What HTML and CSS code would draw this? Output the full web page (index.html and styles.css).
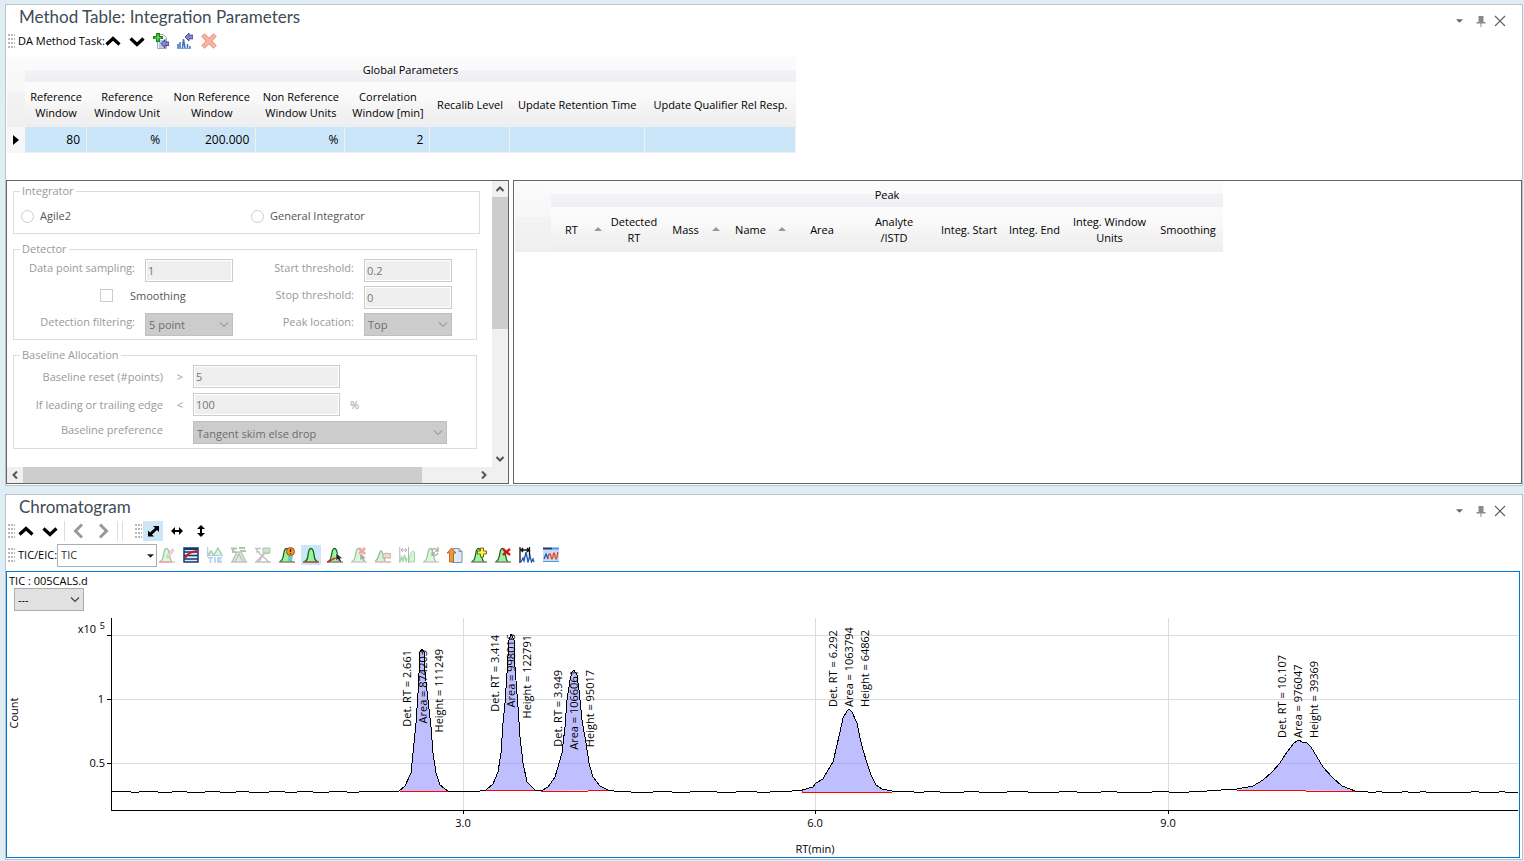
FILE: index.html
```html
<!DOCTYPE html>
<html lang="en">
<head>
<meta charset="utf-8">
<title>Data Analysis Method</title>
<link rel="stylesheet" href="styles.css">
</head>
<body>
<svg class="defs" aria-hidden="true">
  <defs>
    <symbol id="up" viewBox="0 0 16 16"><path d="M1.500 11.500 8 5.500l6.500 6" fill="none" stroke="currentColor" stroke-width="3.200"/></symbol>
    <symbol id="down" viewBox="0 0 16 16"><path d="M1.500 5.500 8 11.500l6.500-6" fill="none" stroke="currentColor" stroke-width="3.200"/></symbol>
    <symbol id="left" viewBox="0 0 16 16"><path d="M11 1.500 4.500 8l6.500 6.500" fill="none" stroke="currentColor" stroke-width="3"/></symbol>
    <symbol id="right" viewBox="0 0 16 16"><path d="m5 1.500 6.500 6.500L5 14.500" fill="none" stroke="currentColor" stroke-width="3"/></symbol>
    <symbol id="chev" viewBox="0 0 10 6"><path d="m1 .5 4 4 4-4" fill="none" stroke="currentColor" stroke-width="1.200"/></symbol>
    <symbol id="tri" viewBox="0 0 8 4"><path d="M0 0h8L4 4z" fill="currentColor"/></symbol>
    <symbol id="pin" viewBox="0 0 10 12"><path d="M2.500 1h5v6h2v1.500h-4V12h-1V8.500h-4V7h2z" fill="#8a8a8a"/></symbol>
    <symbol id="close" viewBox="0 0 12 12"><path d="m1 1 10 10M11 1 1 11" stroke="#5d666d" stroke-width="1.200"/></symbol>
    <symbol id="bell" viewBox="0 0 16 16"><path d="M1.500 14.500c3-1 3-3 3.600-7C5.500 4 6 1.500 8 1.500s2.500 2.500 3 6c.6 4 .6 6 3.500 7z" fill="#9af29a"/><path d="M1.500 14.500c3-1 3-3 3.600-7C5.500 4 6 1.500 8 1.500s2.500 2.500 3 6c.6 4 .6 6 3.500 7" fill="none" stroke="#12651b" stroke-width="1.300"/><path d="M0 15h16" stroke="#a04030" stroke-width="1.500"/></symbol>
    <symbol id="bell-left" viewBox="0 0 16 16"><path d="M1 14.500c2.500-1 3-3 3.600-7C5 4 5.500 1.500 7.500 1.500S10 4 10.500 7.500c.6 4 .6 6 2.500 7z" fill="#9af29a"/><path d="M1 14.500c2.500-1 3-3 3.600-7C5 4 5.500 1.500 7.500 1.500S10 4 10.500 7.500c.6 4 .6 6 2.500 7" fill="none" stroke="#12651b" stroke-width="1.300"/><path d="M0 15h16" stroke="#665" stroke-width="1.200"/></symbol>
    <symbol id="cursor" viewBox="0 0 8 10"><path d="M1 0v8l2-2 2 3.500 1.500-1L5 5.500h2.500z" fill="#222" stroke="#fff" stroke-width=".5"/></symbol>
  </defs>
</svg>
<main class="workspace">
  <section class="panel">
    <header class="titlebar">
      <h1>Method Table: Integration Parameters</h1>
      <div class="window-tools">
        <button aria-label="Window menu"><svg class="menu-tri"><use href="#tri"/></svg></button>
        <button aria-label="Pin"><svg class="pin"><use href="#pin"/></svg></button>
        <button aria-label="Close"><svg class="close"><use href="#close"/></svg></button>
      </div>
    </header>
    <div class="toolbar task">
      <span class="grip"></span>
      <span class="tool-label">DA Method Task:</span>
      <button aria-label="Previous task"><svg><use href="#up"/></svg></button>
      <button aria-label="Next task"><svg><use href="#down"/></svg></button>
      <button aria-label="Add method"><svg viewBox="0 0 16 16"><path d="M4.500 1.500h6l3 3v11h-9z" fill="#eef3fa" stroke="#9aa9bd"/><path d="M6 8h5M6 10h4M6 12h5M6 14h6" stroke="#8fa5c4"/><path d="M3 0h4v3h3v3H7v3H3V6H0V3h3z" fill="#178a1c"/><path d="M4.500 1.500h1v3h3v.8h-3v2.500h-1V5.300h-3v-.8h3z" fill="#9be58c"/><path d="m8 10.500 4-4v2.500h4v3.500h-4V15z" fill="#8b85cf" stroke="#3f3a85" stroke-width=".9"/></svg></button>
      <button aria-label="Add from chromatogram"><svg viewBox="0 0 16 16"><path d="M1 15v-4M3 15V9M5.500 15l1-9 1.500 9M10.500 15v-4M13 15v-2" fill="none" stroke="#3c70b8" stroke-width="1.500"/><path d="M0 15.500h14" stroke="#79a9dc"/><path d="m8 4 4-4v2.200h4v3.600h-4V8z" fill="#8b85cf" stroke="#3f3a85" stroke-width=".9"/></svg></button>
      <button aria-label="Delete"><svg viewBox="0 0 16 16"><path d="M3.500.8 8 5.200 12.500.8l2.700 2.700L10.800 8l4.400 4.500-2.700 2.700L8 10.800l-4.500 4.400-2.700-2.700L5.200 8 .8 3.500z" fill="#f8b2a4" stroke="#e29082"/></svg></button>
    </div>
    <table class="grid global">
      <colgroup><col class="w18"><col class="w62"><col class="w80"><col class="w89"><col class="w89"><col class="w85"><col class="w79"><col class="w135"><col class="w151"></colgroup>
      <thead>
        <tr class="group"><th class="corner" rowspan="2"></th><th colspan="8">Global Parameters</th></tr>
        <tr class="heads"><th>Reference<br>Window</th><th>Reference<br>Window Unit</th><th>Non Reference<br>Window</th><th>Non Reference<br>Window Units</th><th>Correlation<br>Window [min]</th><th>Recalib Level</th><th>Update Retention Time</th><th>Update Qualifier Rel Resp.</th></tr>
      </thead>
      <tbody>
        <tr><th class="marker"><svg viewBox="0 0 6 10"><path d="M0 0v10l6-5z"/></svg></th><td>80</td><td>%</td><td>200.000</td><td>%</td><td>2</td><td></td><td></td><td></td></tr>
      </tbody>
    </table>
    <div class="split">
      <div class="form-box">
        <form class="params">
          <fieldset class="integrator" disabled>
            <legend>Integrator</legend>
            <div class="choices">
              <label><input type="radio" name="integrator">Agile2</label>
              <label><input type="radio" name="integrator">General Integrator</label>
            </div>
          </fieldset>
          <fieldset class="detector" disabled>
            <legend>Detector</legend>
            <div class="detector-grid">
              <label for="sampling">Data point sampling:</label><input id="sampling" value="1">
              <label for="start">Start threshold:</label><input id="start" value="0.2">
              <label class="check"><input type="checkbox">Smoothing</label>
              <label for="stop">Stop threshold:</label><input id="stop" value="0">
              <label for="filter">Detection filtering:</label><span class="drop"><select id="filter"><option>5 point</option></select><svg><use href="#chev"/></svg></span>
              <label for="location">Peak location:</label><span class="drop"><select id="location"><option>Top</option></select><svg><use href="#chev"/></svg></span>
            </div>
          </fieldset>
          <fieldset class="baseline" disabled>
            <legend>Baseline Allocation</legend>
            <div class="baseline-grid">
              <label for="reset">Baseline reset (#points)</label><span class="sign">&gt;</span><input id="reset" value="5"><span></span>
              <label for="edge">If leading or trailing edge</label><span class="sign">&lt;</span><input id="edge" value="100"><span>%</span>
              <label class="raised" for="pref">Baseline preference</label><span></span><span class="drop wide"><select id="pref"><option>Tangent skim else drop</option></select><svg><use href="#chev"/></svg></span>
            </div>
          </fieldset>
        </form>
        <div class="vbar"><button aria-label="Scroll up"><svg viewBox="0 0 8 8"><path d="m.5 6 3.500-3.500L7.500 6"/></svg></button><div class="vtrack"><span class="vthumb"></span></div><button aria-label="Scroll down"><svg viewBox="0 0 8 8"><path d="M.5 2 4 5.500 7.500 2"/></svg></button></div>
        <div class="hbar"><button aria-label="Scroll left"><svg viewBox="0 0 8 8"><path d="M6 .5 2.500 4 6 7.500"/></svg></button><div class="htrack"><span class="hthumb"></span></div><button aria-label="Scroll right"><svg viewBox="0 0 8 8"><path d="M2 .5 5.500 4 2 7.500"/></svg></button></div>
      </div>
      <div class="peak-box">
        <table class="grid peaks">
          <colgroup><col class="w36"><col class="w56"><col class="w54"><col class="w64"><col class="w66"><col class="w62"><col class="w82"><col class="w68"><col class="w63"><col class="w87"><col class="w70"></colgroup>
          <thead>
            <tr class="group"><th class="corner" rowspan="2"></th><th colspan="10">Peak</th></tr>
            <tr class="heads"><th class="sort">RT</th><th>Detected<br>RT</th><th class="sort">Mass</th><th class="sort">Name</th><th>Area</th><th>Analyte<br>/ISTD</th><th>Integ. Start</th><th>Integ. End</th><th>Integ. Window<br>Units</th><th>Smoothing</th></tr>
          </thead>
        </table>
      </div>
    </div>
  </section>

  <section class="panel">
    <header class="titlebar">
      <h1>Chromatogram</h1>
      <div class="window-tools">
        <button aria-label="Window menu"><svg class="menu-tri"><use href="#tri"/></svg></button>
        <button aria-label="Pin"><svg class="pin"><use href="#pin"/></svg></button>
        <button aria-label="Close"><svg class="close"><use href="#close"/></svg></button>
      </div>
    </header>
    <div class="toolbar nav">
      <span class="grip"></span>
      <button aria-label="Previous sample"><svg><use href="#up"/></svg></button>
      <button aria-label="Next sample"><svg><use href="#down"/></svg></button>
      <span class="sep"></span>
      <button class="grey" aria-label="Back"><svg><use href="#left"/></svg></button>
      <button class="grey" aria-label="Forward"><svg><use href="#right"/></svg></button>
      <span class="sep"></span><span class="sep"></span>
      <span class="grip second"></span>
      <button class="on" aria-label="Zoom both"><svg viewBox="0 0 16 16"><path d="M8 3h6v6l-2-2-5 4.500 2 2H3v-6l2 2L10 5z"/></svg></button>
      <button aria-label="Zoom horizontally"><svg viewBox="0 0 16 16"><path d="m2 8 4-4v3h4V4l4 4-4 4V9H6v3z"/></svg></button>
      <button aria-label="Zoom vertically"><svg viewBox="0 0 16 16"><path d="m8 2 4 4H9v4h3l-4 4-4-4h3V6H4z"/></svg></button>
    </div>
    <div class="toolbar tic">
      <span class="grip"></span>
      <label class="tool-label" for="trace">TIC/EIC:</label>
      <span class="drop combo"><select id="trace"><option>TIC</option></select><svg><use href="#tri"/></svg></span>
      <button class="off" aria-label="Manual integration"><svg viewBox="0 0 16 16"><use href="#bell-left"/><path d="m7 10 6-8 2 1.500-6 7.500z" fill="#e8a080" stroke="#805050" stroke-width=".8"/><path d="M0 15h13" stroke="#e02020" stroke-width="1.500"/></svg></button>
      <button aria-label="Calibration list"><svg viewBox="0 0 16 16"><path d="M1 1h14v14H1z" fill="#dfe8f5" stroke="#17386e" stroke-width="1.500"/><path d="M1 5h14M1 8.500h14M1 12h14" stroke="#17386e" stroke-width="1.300"/><path d="M1 2h14" stroke="#17386e" stroke-width="2"/><path d="M2 11c3-4 4-6 12-7" fill="none" stroke="#c81a1a" stroke-width="2"/></svg></button>
      <button class="off" aria-label="Show TIC"><svg viewBox="0 0 16 16"><path d="M.7 0v10M0 8.500h16" stroke="#347bd0" stroke-width="1.200"/><path d="m1 8 3-4 3 4 4-7 4 7" fill="#a8e8a0" stroke="#26892a" stroke-width="1.500"/><path d="M1 10.700h5M3.500 11v5M8 10v6M15 10.700h-4V15h4M11 13h3" fill="none" stroke="#347bd0" stroke-width="1.500"/></svg></button>
      <button class="off" aria-label="Extract peaks"><svg viewBox="0 0 16 16"><path d="M0 1.500h6M2 2v3h3M8 1h6M9 4h6" fill="none" stroke="#267b2a" stroke-width="2"/><path d="M1 15 6 5h4l5 10M4 15l4-8 4 8M0 15h16" fill="#a8dca8" stroke="#666" stroke-width="1.500"/></svg></button>
      <button class="off" aria-label="Extract ions"><svg viewBox="0 0 16 16"><path d="M0 1.500h6M2 2v3h3" fill="none" stroke="#666" stroke-width="1.500"/><path d="M8 1h7v5H8z" fill="#74c474" stroke="#267b2a"/><path d="m1 15 9-9M4 6l10 9M4 15l4-8 6-1M0 15h16" fill="none" stroke="#666" stroke-width="1.500"/></svg></button>
      <button aria-label="Integration alert"><svg viewBox="0 0 16 16"><use href="#bell-left"/><path d="M9 14c0-4 0-6 2-8l3 2-1 6z" fill="#66caba"/><circle cx="11.500" cy="4.500" r="4" fill="#f3982e" stroke="#99500f"/><path d="M11.500 2v3M11.500 6v1" stroke="#40200a" stroke-width="1.300"/></svg></button>
      <button class="on" aria-label="Integrate"><svg><use href="#bell"/></svg></button>
      <button aria-label="Select peak"><svg viewBox="0 0 16 16"><use href="#bell-left"/><path d="M0 15c6-1 4-4 10-4" fill="none" stroke="#d02020" stroke-width="1.300"/><use href="#cursor" x="8" y="6" width="8" height="10"/></svg></button>
      <button class="off" aria-label="Clear selected peak"><svg viewBox="0 0 16 16"><use href="#bell-left"/><path d="m8 1 6 6M14 1 8 7" stroke="#e02020" stroke-width="2.500"/><use href="#cursor" x="8" y="6" width="8" height="10"/></svg></button>
      <button class="off" aria-label="Split peak"><svg viewBox="0 0 16 16"><path d="M0 14c4-1 4-10 6-10s2 5 4 10" fill="#90ee90" stroke="#12651b" stroke-width="1.500"/><path d="M7 10 10 6l6 1v4H9z" fill="#e9a070" stroke="#55443a"/><path d="M0 15h16" stroke="#a04030" stroke-width="1.500"/></svg></button>
      <button class="off" aria-label="Peak range"><svg viewBox="0 0 16 16"><path d="M.8 0v16M9.500 0v16M2 3h6M4 1 2 3l2 2M6 1l2 2-2 2" fill="none" stroke="#444"/><path d="m1 15 1.500-5L4 14l1.500-6L7 14l1-3" fill="none" stroke="#2b932f" stroke-width="1.500"/><path d="M10 15c1-11 4-12 5.500-10V15z" fill="#90ee90" stroke="#2b932f"/></svg></button>
      <button class="off" aria-label="Replace peak"><svg viewBox="0 0 16 16"><use href="#bell-left"/><path d="M9 4c0-3 4-3 6-1M15 0v4h-3M15 6c-1 3-4 3-6 1M9 9V6h3" fill="none" stroke="#333" stroke-width="1.300"/></svg></button>
      <button aria-label="Update method"><svg viewBox="0 0 16 16"><path d="M6 1.500h6l3 3v11H6z" fill="#dce9fa" stroke="#7792b5"/><path d="M12 1.500v3h3" fill="none" stroke="#7792b5"/><path d="M4.500 1 9 6H6.500v9h-4V6H0z" fill="#ef9539" stroke="#a85a14" stroke-width=".8"/></svg></button>
      <button aria-label="Add peak"><svg viewBox="0 0 16 16"><use href="#bell-left"/><path d="M9.500 1h3v3h3v3h-3v3h-3V7h-3V4h3z" fill="#fff04c" stroke="#776b12"/></svg></button>
      <button aria-label="Remove peak"><svg viewBox="0 0 16 16"><use href="#bell-left"/><path d="m8 2 7 6M15 2 8 8" stroke="#cf1818" stroke-width="2.400"/></svg></button>
      <button aria-label="Noise range"><svg viewBox="0 0 16 16"><path d="M1 0v16M10.500 0v12M2 3h8M4 1 2 3l2 2M8 1l2 2-2 2" fill="none" stroke="#111" stroke-width="1.300"/><path d="m2 15 2-4 1 3L7 5l2 10 2-6 1.500 6 1.500-3 1 3" fill="none" stroke="#2454b4" stroke-width="1.300"/></svg></button>
      <button aria-label="Overlay"><svg viewBox="0 0 16 16"><path d="M0 1h16v14H0z" fill="#c4dcf8"/><path d="M0 1.500h9" stroke="#19396f" stroke-width="2"/><path d="M0 14.500h16" stroke="#4d98e0"/><path d="M9 1.500h7" stroke="#4d98e0" stroke-width="2"/><path d="m1 12 2-5 2 5" fill="none" stroke="#2454b4" stroke-width="1.300"/><path d="M5 12c0-4 1-5 2-5s1 5 2 5 1-6 2-6 1 6 2 6 1-4 2-7" fill="none" stroke="#e34320" stroke-width="1.300"/></svg></button>
    </div>
    <div class="chart-box">
      <div class="chart-name">TIC : 005CALS.d</div>
      <span class="drop scale"><select aria-label="Chart scale"><option>---</option></select><svg><use href="#chev"/></svg></span>
      <svg class="chart" viewBox="7 612 1512 244" role="img" aria-label="Total ion chromatogram">
        <path class="gridline" d="M112 635.500H1518M112 699.500H1518M112 763.500H1518M463.500 618V810M815.500 618V810M1168.500 618V810"/>
        <g class="fill">
          <path d="M399 791 405 786 411 773 413 753 416 723 418 693 419 673 420 652 422 649 424 652 425 672 428 700 431 727 433 753 436 773 440 785 448 791z"/>
          <path d="M486 790 493 784 498 772 501 753 503 723 505 703 507 673 509 640 511 634 514 640 515 667 518 707 520 737 523 763 527 782 535 790z"/>
          <path d="M541 791 548 787 555 777 562 753 565 727 567 700 570 680 572 672 574 670 577 675 579 690 582 720 586 743 589 763 593 777 600 786 608 790z"/>
          <path d="M802 792V790L813 787 816 783 823 779 828 770 833 762 837 745 840 732 843 718 847 711 849 709 852 712 857 723 860 738 863 750 867 763 871 775 876 785 882 789 892 792z"/>
          <path d="M1237 790 1253 786 1263 780 1272 772 1280 763 1285 755 1290 748 1294 743 1299 740 1302 742 1307 743 1311 747 1317 757 1323 767 1333 778 1342 786 1350 789 1355 791z"/>
        </g>
        <path class="trace" d="M112 791h16l3 1h8l3-1h12l4 1h14l3-1h9l3 1h18l3-1h8l4 1h16l3-1h7l3 1h20l3-1h10l3 1h12l3-1h9l4 1h16l3-1h12l3 1h12l4-1L399 791 405 786 411 773 413 753 416 723 418 693 419 673 420 652 422 649 424 652 425 672 428 700 431 727 433 753 436 773 440 785 448 791l6 1 3-1 4 1 8-1 7 1 4-1L486 790 493 784 498 772 501 753 503 723 505 703 507 673 509 640 511 634 514 640 515 667 518 707 520 737 523 763 527 782 535 790 541 791 548 787 555 777 562 753 565 727 567 700 570 680 572 672 574 670 577 675 579 690 582 720 586 743 589 763 593 777 600 786 608 790l6 1h14l3 1h22l4-1h12l3 1h18l4-1h20l3 1h19l3-1h15l3 1h13l4-1h18L802 790 813 787 816 783 823 779 828 770 833 762 837 745 840 732 843 718 847 711 849 709 852 712 857 723 860 738 863 750 867 763 871 775 876 785 882 789 892 791l14 1 4-1 4 1h10l3-1h9l4 1h24l3-1h9l3 1h28l3-1h14l4 1h31l3-1h12l3 1h24l4-1h9l3 1h35l3-1h11l3 1h20l4-1h14l4-1h10L1237 789 1253 786 1263 780 1272 772 1280 763 1285 755 1290 748 1294 743 1299 740 1302 742 1307 743 1311 747 1317 757 1323 767 1333 778 1342 786 1350 789 1355 791l13 1h8l3-1 3 1h20l3-1 3 1h12l3-1 3 1h45l4-1 4 1h20l3-1 3 1h13"/>
        <path class="base" d="M400 791.500H448M486 790.500H535M541 791.500H588M588 790.500H608M802.500 790V792.500H892M1237 790.500H1306M1306 791.500H1355"/>
        <path class="axis" d="M111.500 618V810.500H1518M107 635.500h4M107 699.500h4M107 763.500h4M463.500 810v4M815.500 810v4M1168.500 810v4"/>
        <g class="mid"><text x="463" y="827">3.0</text><text x="815" y="827">6.0</text><text x="1168" y="827">9.0</text><text x="815" y="853">RT(min)</text><text transform="translate(18 713) rotate(-90)">Count</text></g>
        <g class="end"><text x="96" y="633">x10</text><text class="power" x="105" y="629">5</text><text x="104" y="703">1</text><text x="105" y="767">0.5</text></g>
        <g class="end">
          <text transform="translate(411 650) rotate(-90)">Det. RT = 2.661</text><text transform="translate(427 650) rotate(-90)">Area = 874203</text><text transform="translate(443 649) rotate(-90)">Height = 111249</text>
          <text transform="translate(499 635) rotate(-90)">Det. RT = 3.414</text><text transform="translate(515 634) rotate(-90)">Area = 998016</text><text transform="translate(531 635) rotate(-90)">Height = 122791</text>
          <text transform="translate(562 670) rotate(-90)">Det. RT = 3.949</text><text transform="translate(578 670) rotate(-90)">Area = 1066061</text><text transform="translate(594 670) rotate(-90)">Height = 95017</text>
        </g>
        <g>
          <text transform="translate(837 707) rotate(-90)">Det. RT = 6.292</text><text transform="translate(853 707) rotate(-90)">Area = 1063794</text><text transform="translate(869 707) rotate(-90)">Height = 64862</text>
          <text transform="translate(1286 738) rotate(-90)">Det. RT = 10.107</text><text transform="translate(1302 738) rotate(-90)">Area = 976047</text><text transform="translate(1318 738) rotate(-90)">Height = 39369</text>
        </g>
      </svg>
    </div>
  </section>
</main>
</body>
</html>
```
FILE: styles.css
```css
* { box-sizing: border-box; }
body { margin: 0; background: #e1edf5; color: #000; font: 11px/16px "Open Sans", "Noto Sans", sans-serif; }
.defs { position: absolute; width: 0; height: 0; }
.workspace { display: flex; flex-direction: column; gap: 8px; padding: 4px 1px 0 5px; }
.panel { background: #fff; border: 1px solid #b9c5ca; }
button { padding: 0; border: 0; background: none; color: inherit; font: inherit; }
svg { display: block; }

.titlebar { display: flex; justify-content: space-between; height: 24px; padding: 0 16px 0 13px; }
h1 { margin: 0; color: #414b55; font: 17px/24px Lato, "Open Sans", sans-serif; }
.window-tools { display: flex; align-items: center; gap: 13px; padding-top: 8px; }
.window-tools button:last-child { margin-left: -5px; }
.menu-tri { width: 7px; height: 4px; color: #666; }
.pin { width: 10px; height: 12px; }
.close { width: 12px; height: 12px; }

.toolbar { display: flex; align-items: center; gap: 4px; height: 24px; padding-left: 2px; }
.toolbar button { display: grid; place-items: center; width: 20px; height: 20px; flex: none; }
.toolbar button svg { width: 16px; height: 16px; }
.toolbar .grey { color: #999; }
.toolbar .on { background: #cce6f7; }
.toolbar .off svg { opacity: .4; }
.grip { width: 7px; height: 15px; background: radial-gradient(circle at 1px 1px, #b8b8b8 1px, transparent 1px) 0 0 / 3px 4px; }
.tool-label { margin-left: -1px; white-space: nowrap; }
.task .tool-label { margin-right: -6px; }
.nav .grip + button { margin-left: -3px; }
.nav .second { margin-left: 8px; }
.sep { width: 1px; height: 20px; background: #ddd; }
.tic .combo { margin: 0 -4px; }

.grid { border-collapse: separate; border-spacing: 0; table-layout: fixed; }
.grid th { padding: 0; font-weight: 400; text-align: center; white-space: nowrap; }
.group th { height: 25px; background: linear-gradient(#fbfbfc 50%, #f3f3f7 50%, #eeeef3); }
.group .corner { background: linear-gradient(#fbfbfb, #f7f7f7 50%, #f3f3f3 50%, #efefef); }
.heads th { height: 45px; background: linear-gradient(#fcfcfc, #f8f8f8 45%, #f4f4f4 55%, #eee); }
.grid td { height: 26px; padding: 1px 6px 0 0; background: #cbe6f8; border: solid #f0f0f0; border-width: 0 1px 1px 0; text-align: right; font-size: 12px; }
.grid .marker { background: #f7f7f7; }
.marker svg { width: 6px; height: 10px; margin-left: 6px; }
.global { width: 789px; margin: 4px 0 27px 1px; }
.peaks { width: 708px; margin: 1px 0 0 1px; }
.grid .sort { position: relative; padding-right: 15px; }
.sort::after { content: ""; position: absolute; right: 5px; top: 20px; border: 4px solid transparent; border-top: 0; border-bottom-color: #999; }
.w18 { width: 18px; } .w36 { width: 36px; } .w54 { width: 54px; } .w56 { width: 56px; }
.w62 { width: 62px; } .w63 { width: 63px; } .w64 { width: 64px; } .w66 { width: 66px; }
.w68 { width: 68px; } .w70 { width: 70px; } .w79 { width: 79px; } .w80 { width: 80px; }
.w82 { width: 82px; } .w85 { width: 85px; } .w87 { width: 87px; } .w89 { width: 89px; }
.w135 { width: 135px; } .w151 { width: 151px; }

.split { display: grid; grid-template-columns: 503px minmax(0, 1fr); gap: 4px; padding-bottom: 1px; }
.form-box, .peak-box { border: 1px solid #646464; }
.form-box { display: grid; grid-template: auto 16px / minmax(0, 1fr) 16px; }
.params { display: flex; flex-direction: column; gap: 7px; padding: 2px 15px 18px 6px; color: #999; }
fieldset { min-width: 0; margin: 0; padding: 0; border: 1px solid #dcdcdc; }
.integrator { margin-right: -3px; }
.choices { display: grid; grid-template-columns: 230px 1fr; padding: 9px 0 9px 7px; }
.choices label, .check { display: flex; align-items: center; color: #555; }
.choices label { gap: 6px; }
legend { margin-left: 6px; padding: 0 2px; }
input[type=radio], input[type=checkbox] { width: 13px; height: 13px; margin: 0; appearance: none; border: 1px solid #ccc; background: #fff; }
input[type=radio] { border-radius: 50%; }
.detector-grid { display: grid; grid-template-columns: 121px 88px 111px 88px; grid-auto-rows: 23px; gap: 4px 10px; padding: 2px 0 3px; line-height: 18px; }
.detector-grid > label { text-align: right; }
.detector-grid > .check { grid-column: span 2; gap: 17px; height: 19px; padding-left: 86px; }
.baseline-grid { display: grid; grid-template-columns: 149px 10px 147px 97px; grid-auto-rows: 23px; gap: 5px 10px; padding: 2px 0 4px; line-height: 23px; }
.baseline-grid > label { text-align: right; }
.baseline-grid > .raised { line-height: 18px; }
.sign { text-align: right; }
.params input:not([type]) { width: 100%; height: 23px; padding: 0 2px; border: 1px solid #ccc; outline: 1px solid #fff; outline-offset: -2px; background: #efefef; color: #777; font: inherit; }
.drop { position: relative; display: block; color: #a0a0a0; }
.drop select { display: block; width: 100%; height: 23px; margin: 0; padding: 0 3px; appearance: none; border: 1px solid #bfbfbf; border-radius: 0; background: #ccc; color: #6d6d6d; font: inherit; opacity: 1; }
.drop svg { position: absolute; right: 4px; top: 9px; width: 10px; height: 6px; pointer-events: none; }
.drop.wide { grid-column: span 2; }
.drop.combo { width: 100px; color: #222; }
.combo select { border-color: #adadad; background: #fff; color: #333; }
.combo svg { right: 3px; top: 10px; width: 7px; height: 4px; }
.drop.scale { width: 70px; margin-left: 7px; color: #444; }
.scale select { border-color: #adadad; background: #e1e1e1; color: #000; }

.vbar, .hbar { display: flex; background: #f0f0f0; }
.vbar { grid-row: span 2; flex-direction: column; padding-bottom: 16px; }
.vbar button, .hbar button { display: grid; place-items: center; width: 16px; height: 16px; flex: none; }
.vbar svg, .hbar svg { width: 8px; height: 8px; fill: none; stroke: #555; stroke-width: 2; }
.vtrack, .htrack { flex: 1; }
.vthumb, .hthumb { display: block; background: #cdcdcd; }
.vthumb { height: 52%; }
.hthumb { width: 88%; height: 100%; }

.chart-box { margin: 4px 2px 1px 0; padding-bottom: 1px; border: 1px solid #0078d7; }
.chart-name { padding: 1px 2px 0; line-height: 15px; }
.chart { width: 100%; height: auto; margin-top: 1px; font-size: 11px; }
.gridline { fill: none; stroke: #dcdcdc; }
.fill { fill: #8080ff; fill-opacity: .5; }
.trace, .axis, .base { fill: none; stroke: #000; shape-rendering: crispEdges; }
.base { stroke: #f00; }
.mid { text-anchor: middle; }
.end { text-anchor: end; }
.power { font-size: 9px; }
```
